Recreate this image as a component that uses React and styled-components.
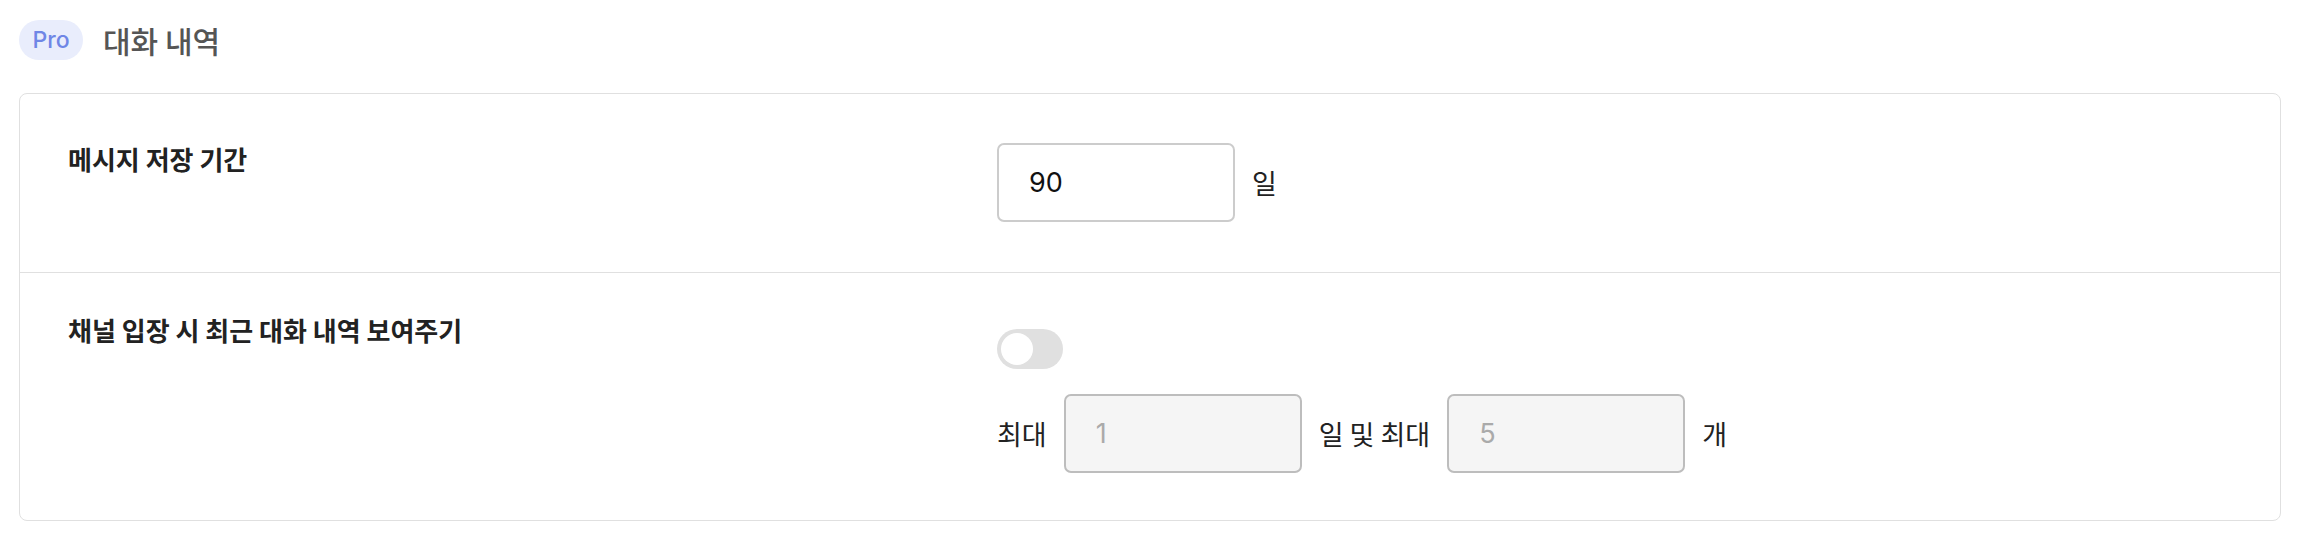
import styled, { createGlobalStyle } from "styled-components";

const GlobalStyle = createGlobalStyle`
  body {
    margin: 0;
    background: #ffffff;
    font-family: Inter, "Noto Sans CJK KR", sans-serif;
    color: #222222;
  }
`;

const Page = styled.div`
  padding: 20px 19px 13px 19px;
`;

const Header = styled.div`
  display: flex;
  align-items: center;
  gap: 20px;
  height: 40px;
  margin-bottom: 33px;
`;

const ProBadge = styled.span`
  display: inline-flex;
  align-items: center;
  justify-content: center;
  width: 64px;
  height: 40px;
  border-radius: 20px;
  background: #e9edfc;
  color: #6f86e6;
  font-size: 23px;
  font-weight: 500;
`;

const HeaderTitle = styled.h2`
  margin: 0;
  font-size: 30px;
  font-weight: 500;
  color: #555555;
  font-family: "Noto Sans CJK KR", sans-serif;
`;

const Card = styled.section`
  border: 1px solid #e0e0e0;
  border-radius: 8px;
`;

const Row = styled.div`
  display: grid;
  grid-template-columns: 929px 1fr;
  padding: ${(p) => p.$padTop}px 48px ${(p) => p.$padBottom}px 48px;
  & + & {
    border-top: 1px solid #e0e0e0;
  }
`;

const Label = styled.div`
  font-family: "Noto Sans CJK KR", sans-serif;
  font-size: 26px;
  font-weight: 600;
  line-height: 1.2;
  color: #222222;
`;

const Controls = styled.div`
  display: flex;
  flex-direction: column;
  gap: 25px;
`;

const Line = styled.div`
  display: flex;
  align-items: center;
  gap: 17px;
`;

const Text = styled.span`
  font-family: "Noto Sans CJK KR", sans-serif;
  font-size: 27px;
  color: #222222;
`;

const NumberInput = styled.input`
  box-sizing: border-box;
  width: 238px;
  height: 79px;
  padding: 0 30px;
  border: 2px solid ${(p) => (p.disabled ? "#bdbdbd" : "#cccccc")};
  border-radius: 7px;
  background: ${(p) => (p.disabled ? "#f5f5f5" : "#ffffff")};
  color: ${(p) => (p.disabled ? "#aaaaaa" : "#111111")};
  font-family: Inter, "Noto Sans CJK KR", sans-serif;
  font-size: 27px;
  outline: none;
`;

const Switch = styled.button`
  position: relative;
  width: 66px;
  height: 40px;
  margin-top: 15px;
  padding: 0;
  border: none;
  border-radius: 20px;
  background: ${(p) => (p.$on ? "#6f86e6" : "#e0e0e0")};
  cursor: pointer;
`;

const Knob = styled.span`
  position: absolute;
  top: 4px;
  left: ${(p) => (p.$on ? "30px" : "4px")};
  width: 32px;
  height: 32px;
  border-radius: 50%;
  background: #ffffff;
`;

export default function App() {
  return (
    <>
      <GlobalStyle />
      <Page>
        <Header>
          <ProBadge>Pro</ProBadge>
          <HeaderTitle>대화 내역</HeaderTitle>
        </Header>
        <Card>
          <Row $padTop={49} $padBottom={50}>
            <Label>메시지 저장 기간</Label>
            <Controls>
              <Line>
                <NumberInput defaultValue="90" />
                <Text>일</Text>
              </Line>
            </Controls>
          </Row>
          <Row $padTop={41} $padBottom={47}>
            <Label>채널 입장 시 최근 대화 내역 보여주기</Label>
            <Controls>
              <Switch aria-label="toggle">
                <Knob />
              </Switch>
              <Line>
                <Text>최대</Text>
                <NumberInput disabled defaultValue="1" />
                <Text>일 및 최대</Text>
                <NumberInput disabled defaultValue="5" />
                <Text>개</Text>
              </Line>
            </Controls>
          </Row>
        </Card>
      </Page>
    </>
  );
}
